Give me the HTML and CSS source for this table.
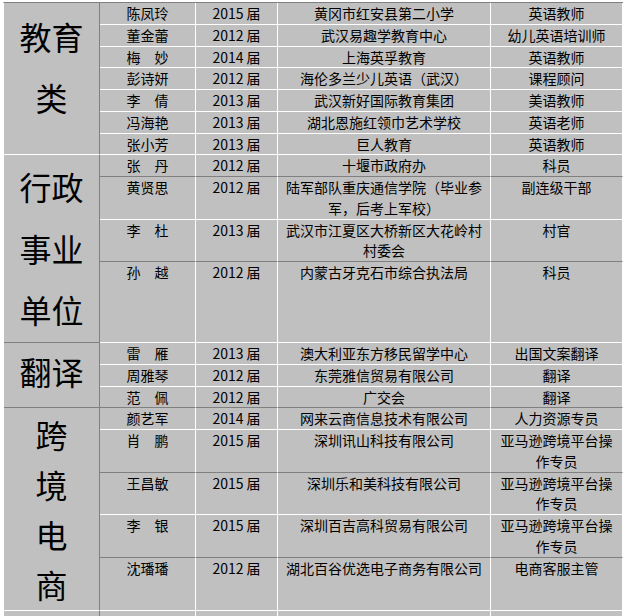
FILE: index.html
```html
<!DOCTYPE html>
<html lang="zh-CN">
<head>
<meta charset="utf-8">
<title>毕业生就业去向</title>
<link rel="stylesheet" href="styles.css">
</head>
<body>
<table class="roster">
  <colgroup>
    <col class="c-cat">
    <col class="c-name">
    <col class="c-year">
    <col class="c-org">
    <col class="c-job">
  </colgroup>
  <tbody>
    <tr>
      <td class="cat cat-edu" rowspan="7">教育类</td>
      <td>陈凤玲</td><td>2015 届</td><td>黄冈市红安县第二小学</td><td>英语教师</td>
    </tr>
    <tr><td>董金蕾</td><td>2012 届</td><td>武汉易趣学教育中心</td><td>幼儿英语培训师</td></tr>
    <tr><td>梅　妙</td><td>2014 届</td><td>上海英孚教育</td><td>英语教师</td></tr>
    <tr><td>彭诗妍</td><td>2012 届</td><td>海伦多兰少儿英语（武汉）</td><td>课程顾问</td></tr>
    <tr><td>李　倩</td><td>2013 届</td><td>武汉新好国际教育集团</td><td>美语教师</td></tr>
    <tr><td>冯海艳</td><td>2013 届</td><td>湖北恩施红领巾艺术学校</td><td>英语老师</td></tr>
    <tr><td>张小芳</td><td>2013 届</td><td>巨人教育</td><td>英语教师</td></tr>

    <tr class="dark">
      <td class="cat cat-gov" rowspan="4">行政事业单位</td>
      <td>张　丹</td><td>2012 届</td><td>十堰市政府办</td><td>科员</td>
    </tr>
    <tr><td>黄贤思</td><td>2012 届</td><td>陆军部队重庆通信学院（毕业参军，后考上军校）</td><td>副连级干部</td></tr>
    <tr class="dark"><td>李　杜</td><td>2013 届</td><td>武汉市江夏区大桥新区大花岭村村委会</td><td>村官</td></tr>
    <tr class="tall"><td>孙　越</td><td>2012 届</td><td>内蒙古牙克石市综合执法局</td><td>科员</td></tr>

    <tr>
      <td class="cat cat-tr" rowspan="3">翻译</td>
      <td>雷　雁</td><td>2013 届</td><td>澳大利亚东方移民留学中心</td><td>出国文案翻译</td>
    </tr>
    <tr><td>周雅琴</td><td>2012 届</td><td>东莞雅信贸易有限公司</td><td>翻译</td></tr>
    <tr class="dark"><td>范　佩</td><td>2012 届</td><td>广交会</td><td>翻译</td></tr>

    <tr>
      <td class="cat cat-ec" rowspan="5">跨<br>境<br>电<br>商</td>
      <td>颜艺军</td><td>2014 届</td><td>网来云商信息技术有限公司</td><td>人力资源专员</td>
    </tr>
    <tr class="dark"><td>肖　鹏</td><td>2015 届</td><td>深圳讯山科技有限公司</td><td>亚马逊跨境平台操作专员</td></tr>
    <tr><td>王昌敏</td><td>2015 届</td><td>深圳乐和美科技有限公司</td><td>亚马逊跨境平台操作专员</td></tr>
    <tr class="dark"><td>李　银</td><td>2015 届</td><td>深圳百吉高科贸易有限公司</td><td>亚马逊跨境平台操作专员</td></tr>
    <tr class="mid"><td>沈璠璠</td><td>2012 届</td><td>湖北百谷优选电子商务有限公司</td><td>电商客服主管</td></tr>

    <tr class="last">
      <td class="cat cat-next"></td>
      <td>林　静</td><td>2013 届</td><td>深圳市有棵树科技有限公司</td><td>外贸业务专员</td>
    </tr>
  </tbody>
</table>
</body>
</html>
```

FILE: styles.css
```css
html,
body {
  margin: 0;
  padding: 0;
  background: #ffffff;
  overflow: hidden;
}

.roster {
  margin: 2px 0 0 3px;
  width: 620px;
  table-layout: fixed;
  border-collapse: separate;
  border-spacing: 0;
  background: #c0c0c0;
  border-top: 1px solid #808080;
  border-left: 1px solid #ffffff;
  font-family: "Noto Sans CJK SC", "Noto Sans", sans-serif;
  font-size: 14px;
  color: #000000;
}

.c-cat { width: 96px; }
.c-name { width: 96px; }
.c-year { width: 82px; }
.c-org { width: 213px; }
.c-job { width: 132px; }

.roster td {
  padding: 0 4px;
  border-right: 1px solid #ffffff;
  border-bottom: 1px solid #ffffff;
  line-height: 20.75px;
  text-align: center;
  vertical-align: top;
  white-space: normal;
}

.roster tr.dark td {
  border-bottom-color: #808080;
}

.roster tr.tall {
  height: 81px;
}

.roster tr.mid {
  height: 53px;
}

.roster tr.last {
  height: 40px;
}

.roster tr.last td {
  padding-top: 2px;
}

.roster td.cat {
  padding: 0;
  font-size: 32px;
  vertical-align: middle;
  border-right-color: #808080;
  border-bottom-color: #ffffff;
}

.roster td.cat-edu {
  line-height: 61px;
  padding-bottom: 23px;
}

.roster td.cat-gov {
  line-height: 61.5px;
}

.roster td.cat-tr {
  line-height: 56px;
  padding-bottom: 8px;
  border-bottom-color: #808080;
}

.roster td.cat-ec {
  line-height: 50px;
}

.roster td.cat-next {
  line-height: 40px;
}
```
